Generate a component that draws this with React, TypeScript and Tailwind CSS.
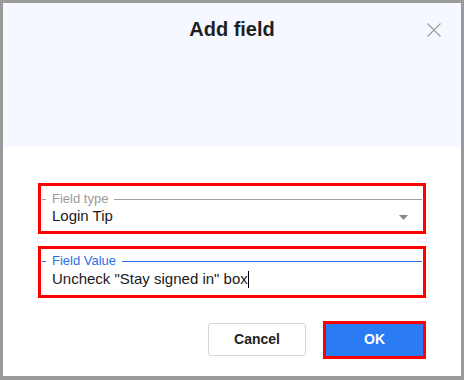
export default function App() {
  return (
    <div className="w-[464px] h-[380px] bg-[#9a9a9a] pt-[3px] px-[3px] pb-[4px] font-['Liberation_Sans',Arial,sans-serif]">
      <div className="h-full bg-white flex flex-col">
        <div className="h-[144px] bg-[#f5f8fe] relative">
          <h2 className="text-center text-[20px] font-bold text-[#1f1f1f] leading-none pt-[16px]">Add field</h2>
          <button className="absolute right-[20px] top-[20px] w-[14px] h-[14px]">
            <svg width="14" height="14" viewBox="0 0 14 14" fill="none" stroke="#9a9a9a" strokeWidth="1.1">
              <path d="M0.5 0.5L13.5 13.5M13.5 0.5L0.5 13.5" />
            </svg>
          </button>
        </div>

        <div className="px-[35px] pt-[36px] flex flex-col gap-[12px]">
          <div className="border-[3px] border-[#ff0000] h-[51px] px-px pt-[5px]">
            <div className="flex items-center h-[14px]">
              <span className="w-[4px] h-px bg-[#a0a0a0] mt-[2px]" />
              <span className="px-[6px] text-[13px] leading-none text-[#9b9b9b]">Field type</span>
              <span className="flex-1 h-px bg-[#a0a0a0] mt-[2px]" />
            </div>
            <div className="flex items-center h-[22px] pl-[10px] pr-[14px]">
              <span className="flex-1 text-[15px] text-[#1a1a1a]">Login Tip</span>
              <svg width="9" height="5" viewBox="0 0 9 5" className="mt-[2px]">
                <path d="M0 0H9L4.5 5Z" fill="#8a8a8a" />
              </svg>
            </div>
          </div>

          <div className="border-[3px] border-[#ff0000] h-[52px] px-px pt-[4px]">
            <div className="flex items-center h-[14px]">
              <span className="w-[4px] h-px bg-[#2a6fe6] mt-[2px]" />
              <span className="px-[6px] text-[13px] leading-none text-[#2a6fe6]">Field Value</span>
              <span className="flex-1 h-px bg-[#2a6fe6] mt-[2px]" />
            </div>
            <div className="flex items-center h-[24px] pl-[10px]">
              <span className="text-[15px] text-[#1a1a1a]">Uncheck "Stay signed in" box</span>
              <span className="w-px h-[17px] bg-black" />
            </div>
          </div>
        </div>

        <div className="flex justify-end items-center gap-[20px] pr-[38px] mt-[25px]">
          <button className="w-[98px] h-[33px] border border-[#d6d6d6] rounded-[3px] bg-white text-[14px] font-bold text-[#222]">
            Cancel
          </button>
          <button className="w-[97px] h-[32px] bg-[#2b7bf5] text-white text-[14px] font-bold outline-[3px] outline-solid outline-[#ff0000]">
            OK
          </button>
        </div>
      </div>
    </div>
  );
}
